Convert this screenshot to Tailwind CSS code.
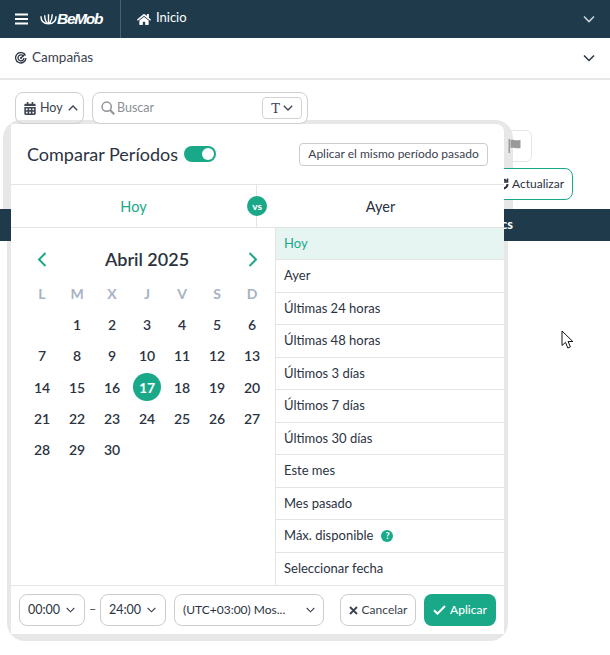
<!DOCTYPE html>
<html lang="es">
<head>
    <meta charset="UTF-8">
    <meta name="viewport" content="width=device-width, initial-scale=1.0">
    <title>BeMob - Campañas</title>
    <script src="https://cdn.jsdelivr.net/npm/@tailwindcss/browser@4"></script>
</head>
<body class="relative w-[610px] h-[655px] overflow-hidden bg-white font-['Lato',sans-serif] text-[#2b3342]">
    <!-- top nav -->
    <header class="flex items-center h-[38px] bg-[#1e3a4b] text-white">
        <div class="flex items-center w-[121px] h-full border-r border-[#4a6270] pl-[15px]">
            <svg class="w-[13px] h-[12px]" viewBox="0 0 13 12" fill="none" stroke="white" stroke-width="2"><path d="M0 1.5h13M0 6h13M0 10.5h13"/></svg>
            <svg class="ml-[12px] w-[17px] h-[14px]" viewBox="0 0 18 14" fill="none" stroke="white" stroke-width="1.5"><path d="M1 4c0 5 3 8 8 8s8-3 8-8M5 3c0 4 1 7 3 9M9 2v10M13 2c0 4-1 7-3 10"/></svg>
            <span class="font-['Liberation_Sans',sans-serif] font-bold italic text-[15.5px] tracking-[-1.3px]">BeMob</span>
        </div>
        <svg class="ml-[16px] w-[14px] h-[13px]" viewBox="0 0 576 512" fill="white"><path d="M280.37 148.26L96 300.11V464a16 16 0 0 0 16 16l112.06-.29a16 16 0 0 0 15.92-16V368a16 16 0 0 1 16-16h64a16 16 0 0 1 16 16v95.64a16 16 0 0 0 16 16.05L464 480a16 16 0 0 0 16-16V300L295.67 148.26a12.19 12.19 0 0 0-15.3 0zM571.6 251.47L488 182.56V44.05a12 12 0 0 0-12-12h-56a12 12 0 0 0-12 12v72.61L318.47 43a48 48 0 0 0-61 0L4.34 251.47a12 12 0 0 0-1.6 16.9l25.5 31A12 12 0 0 0 45.15 301l235.22-193.74a12.19 12.19 0 0 1 15.3 0L530.9 301a12 12 0 0 0 16.9-1.6l25.5-31a12 12 0 0 0-1.7-16.93z"/></svg>
        <span class="ml-[5px] text-[13px] -mt-[2px]">Inicio</span>
        <svg class="ml-auto mr-[15px] w-[12px] h-[8px]" viewBox="0 0 12 8" fill="none" stroke="#c9d2d8" stroke-width="1.6"><path d="M1 1.5l5 5 5-5"/></svg>
    </header>

    <!-- section row -->
    <div class="flex items-center h-[42px] border-b-2 border-[#e8e8e8] pl-[15px]">
        <svg class="w-[12px] h-[12px]" viewBox="0 0 12 12" fill="none" stroke="#2b3342" stroke-width="1.3"><path d="M10.5 3.5A5.2 5.2 0 1 0 11 6"/><path d="M8.6 4.4A3 3 0 1 0 9 6"/><circle cx="6" cy="6" r="1" fill="#2b3342" stroke="none"/><path d="M6 6l4-4"/></svg>
        <span class="ml-[5px] text-[13.5px] text-[#3a4250] -mt-[1px]">Campañas</span>
        <svg class="ml-auto mr-[15px] w-[12px] h-[8px]" viewBox="0 0 12 8" fill="none" stroke="#2b3342" stroke-width="1.5"><path d="M1 1.5l5 5 5-5"/></svg>
    </div>

    <!-- popup backdrop, sits behind the dark bar -->
    <div class="absolute left-[3px] top-[120px] w-[510px] h-[89px] bg-[#e7e7e7] rounded-t-[18px]"></div>
    <div class="absolute left-[7px] top-[241px] w-[501px] h-[400px] bg-[#e7e7e7] rounded-b-[18px]"></div>

    <!-- toolbar -->
    <div class="relative flex gap-2 items-start pt-3 pl-[15px]">
        <button class="flex items-center w-[69px] h-[32px] pl-2 border border-[#cfcfcf] rounded-lg text-[12.5px] text-[#3a4250]">
            <svg class="w-[12px] h-[13px] shrink-0" viewBox="0 0 448 512" fill="#3f4652"><path d="M0 464c0 26.5 21.5 48 48 48h352c26.5 0 48-21.5 48-48V192H0v272zm320-196c0-6.6 5.4-12 12-12h40c6.6 0 12 5.4 12 12v40c0 6.6-5.4 12-12 12h-40c-6.6 0-12-5.4-12-12v-40zm0 128c0-6.6 5.4-12 12-12h40c6.6 0 12 5.4 12 12v40c0 6.6-5.4 12-12 12h-40c-6.6 0-12-5.4-12-12v-40zM192 268c0-6.6 5.4-12 12-12h40c6.6 0 12 5.4 12 12v40c0 6.6-5.4 12-12 12h-40c-6.6 0-12-5.4-12-12v-40zm0 128c0-6.6 5.4-12 12-12h40c6.6 0 12 5.4 12 12v40c0 6.6-5.4 12-12 12h-40c-6.6 0-12-5.4-12-12v-40zM64 268c0-6.6 5.4-12 12-12h40c6.6 0 12 5.4 12 12v40c0 6.6-5.4 12-12 12H76c-6.6 0-12-5.4-12-12v-40zm0 128c0-6.6 5.4-12 12-12h40c6.6 0 12 5.4 12 12v40c0 6.6-5.4 12-12 12H76c-6.6 0-12-5.4-12-12v-40zM400 64h-48V16c0-8.8-7.2-16-16-16h-32c-8.8 0-16 7.2-16 16v48H160V16c0-8.8-7.2-16-16-16h-32c-8.8 0-16 7.2-16 16v48H48C21.5 64 0 85.5 0 112v48h448v-48c0-26.5-21.5-48-48-48z"/></svg>
            <span class="ml-[4px]">Hoy</span>
            <svg class="ml-[5px] w-[10px] h-[6px]" viewBox="0 0 10 6" fill="none" stroke="#3a4250" stroke-width="1.3"><path d="M.8 5.2L5 1l4.2 4.2"/></svg>
        </button>
        <div class="flex items-center w-[216px] h-[32px] pl-2 pr-[5px] bg-white border border-[#cfcfcf] rounded-lg">
            <svg class="w-[14px] h-[14px] shrink-0" viewBox="0 0 14 14" fill="none" stroke="#8f9296" stroke-width="1.5"><circle cx="5.7" cy="5.7" r="4.6"/><path d="M9 9l4.2 4.2" stroke-width="2"/></svg>
            <span class="ml-[2px] text-[12.5px] text-[#8d9196]">Buscar</span>
            <div class="ml-auto flex items-center justify-center gap-[3px] w-[40px] h-[22px] border border-[#d2d2d2] rounded">
                <span class="font-['DejaVu_Serif',serif] text-[13px] leading-none text-[#3a4250]">T</span>
                <svg class="w-[10px] h-[6px]" viewBox="0 0 10 6" fill="none" stroke="#3a4250" stroke-width="1.3"><path d="M.8.8L5 5l4.2-4.2"/></svg>
            </div>
        </div>
    </div>

    <!-- right side controls, mostly behind the popup -->
    <div class="flex justify-end pr-[78px] mt-[6px]">
        <div class="relative flex items-center justify-center w-[27px] h-[32px] border border-[#e6e6e6] rounded-md">
            <svg class="w-[13px] h-[14px] ml-[-9px] mt-[-1px]" viewBox="0 0 12 14" fill="#9a9a9a"><path d="M0 0h1.5v14H0zM2 1c3-1 4 1 10 0v8c-5 1-7-1-10 0z"/></svg>
        </div>
    </div>
    <div class="flex justify-end pr-[37px] mt-[6px]">
        <button class="relative flex items-center w-[80px] h-[32px] bg-white border border-[#19a888] rounded-lg text-[12px]">
            <svg class="ml-[3px] w-[12px] h-[12px] shrink-0" viewBox="0 0 12 12" fill="none" stroke="#2b3342" stroke-width="2"><path d="M1.5 6a4.5 4.5 0 0 1 8-2.8M10.5 6a4.5 4.5 0 0 1-8 2.8"/><path d="M10.5.5V4H7M1.5 11.5V8H5" stroke-width="1.6"/></svg>
            <span class="ml-[3px] whitespace-nowrap">Actualizar</span>
        </button>
    </div>
    <div class="relative z-10 flex items-center justify-end h-[32px] mt-[9px] pr-[97px] bg-[#1e3a4b] text-white text-[13px] font-bold">cs</div>

    <!-- date range popup -->
    <div class="absolute z-20 left-[11px] top-[124px] flex flex-col w-[493px] h-[510px] bg-white rounded-tr-lg">
        <div class="flex items-center h-[61px] border-b border-[#e4e4e4] pl-4 pr-4">
            <span class="text-[18px]">Comparar Períodos</span>
            <div class="ml-[6px] flex items-center justify-end w-[32px] h-[16px] pr-[2px] bg-[#19a888] rounded-full">
                <div class="w-[12px] h-[12px] bg-white rounded-full"></div>
            </div>
            <button class="ml-auto w-[189px] h-[23px] border border-[#cccccc] rounded text-[12px] whitespace-nowrap text-[#3a4250]">Aplicar el mismo período pasado</button>
        </div>
        <div class="relative grid grid-cols-[246px_1fr] h-[43px] border-b border-[#e4e4e4] text-[14.5px]">
            <div class="flex items-center justify-center border-r border-[#e4e4e4] text-[#19a888] pt-[2px]">Hoy</div>
            <div class="flex items-center justify-center pt-[2px]">Ayer</div>
            <div class="absolute left-[236px] top-[11px] flex items-center justify-center w-[20px] h-[20px] rounded-full bg-[#19a888] text-white text-[10px] font-black">vs</div>
        </div>
        <div class="flex flex-1 min-h-0">
            <!-- calendar -->
            <div class="w-[264px] pl-[13.5px] pt-[15px]">
                <div class="flex items-center justify-between w-[245px] h-[33px] px-[12px]">
                    <svg class="w-[10px] h-[15px]" viewBox="0 0 10 15" fill="none" stroke="#19a888" stroke-width="2"><path d="M8.5 1L2 7.5 8.5 14"/></svg>
                    <span class="text-[18px] font-semibold">Abril 2025</span>
                    <svg class="w-[10px] h-[15px]" viewBox="0 0 10 15" fill="none" stroke="#19a888" stroke-width="2"><path d="M1.5 1L8 7.5 1.5 14"/></svg>
                </div>
                <div class="grid grid-cols-7 w-[245px] h-[31px] mt-[2px] items-center text-center text-[14px] font-bold text-[#a7b2c4]">
                    <span>L</span><span>M</span><span>X</span><span>J</span><span>V</span><span>S</span><span>D</span>
                </div>
                <div class="grid grid-cols-7 auto-rows-[31.25px] w-[245px] items-center justify-items-center text-[14px] font-semibold">
                    <span></span><span>1</span><span>2</span><span>3</span><span>4</span><span>5</span><span>6</span>
                    <span>7</span><span>8</span><span>9</span><span>10</span><span>11</span><span>12</span><span>13</span>
                    <span>14</span><span>15</span><span>16</span><span class="flex items-center justify-center w-[28px] h-[28px] rounded-full bg-[#19a888] text-white font-bold">17</span><span>18</span><span>19</span><span>20</span>
                    <span>21</span><span>22</span><span>23</span><span>24</span><span>25</span><span>26</span><span>27</span>
                    <span>28</span><span>29</span><span>30</span>
                </div>
            </div>
            <!-- presets -->
            <ul class="flex-1 grid grid-rows-11 border-l border-[#e4e4e4] text-[13px] text-[#2b3342]">
                <li class="flex items-center pl-2 border-b border-[#e4e4e4] bg-[#e6f5f2] text-[#19a888]">Hoy</li>
                <li class="flex items-center pl-2 border-b border-[#e4e4e4]">Ayer</li>
                <li class="flex items-center pl-2 border-b border-[#e4e4e4]">Últimas 24 horas</li>
                <li class="flex items-center pl-2 border-b border-[#e4e4e4]">Últimas 48 horas</li>
                <li class="flex items-center pl-2 border-b border-[#e4e4e4]">Últimos 3 días</li>
                <li class="flex items-center pl-2 border-b border-[#e4e4e4]">Últimos 7 días</li>
                <li class="flex items-center pl-2 border-b border-[#e4e4e4]">Últimos 30 días</li>
                <li class="flex items-center pl-2 border-b border-[#e4e4e4]">Este mes</li>
                <li class="flex items-center pl-2 border-b border-[#e4e4e4]">Mes pasado</li>
                <li class="flex items-center pl-2 border-b border-[#e4e4e4]">Máx. disponible<span class="ml-2 flex items-center justify-center w-[12px] h-[12px] rounded-full bg-[#19a888] text-white text-[9px] font-black">?</span></li>
                <li class="flex items-center pl-2">Seleccionar fecha</li>
            </ul>
        </div>
        <!-- footer -->
        <div class="flex items-center h-[49px] border-t border-[#e4e4e4] pl-[8px] text-[12.5px]">
            <div class="flex items-center justify-between w-[66px] h-[32px] pl-[8px] pr-[9px] border border-[#cccccc] rounded-lg">
                <span>00:00</span>
                <svg class="w-[9px] h-[6px]" viewBox="0 0 9 6" fill="none" stroke="#3a4250" stroke-width="1.1"><path d="M.7 1l3.8 3.8L8.3 1"/></svg>
            </div>
            <span class="w-[15px] text-center text-[#555]">–</span>
            <div class="flex items-center justify-between w-[66px] h-[32px] pl-[8px] pr-[9px] border border-[#cccccc] rounded-lg">
                <span>24:00</span>
                <svg class="w-[9px] h-[6px]" viewBox="0 0 9 6" fill="none" stroke="#3a4250" stroke-width="1.1"><path d="M.7 1l3.8 3.8L8.3 1"/></svg>
            </div>
            <div class="ml-2 flex items-center justify-between w-[150px] h-[32px] pl-[8px] pr-[8px] border border-[#cccccc] rounded-lg text-[12px]">
                <span class="whitespace-nowrap">(UTC+03:00) Mos...</span>
                <svg class="w-[9px] h-[6px]" viewBox="0 0 9 6" fill="none" stroke="#3a4250" stroke-width="1.1"><path d="M.7 1l3.8 3.8L8.3 1"/></svg>
            </div>
            <button class="ml-4 flex items-center justify-center gap-[4px] w-[76px] h-[32px] border border-[#cccccc] rounded-lg text-[12px] text-[#3a4250]">
                <svg class="w-[9px] h-[9px]" viewBox="0 0 9 9" fill="none" stroke="#3a4250" stroke-width="1.8"><path d="M1 1l7 7M8 1L1 8"/></svg>
                Cancelar
            </button>
            <button class="ml-2 flex items-center justify-center gap-[4px] w-[72px] h-[32px] rounded-lg bg-[#19a888] text-white text-[12px] font-medium">
                <svg class="w-[13px] h-[10px]" viewBox="0 0 13 10" fill="none" stroke="white" stroke-width="2"><path d="M1 5.2l3.500 3.500L12 1"/></svg>
                Aplicar
            </button>
        </div>
    </div>

    <!-- mouse pointer -->
    <svg class="absolute z-30 left-[561px] top-[330px] w-[13px] h-[20px]" viewBox="0 0 13 20" fill="white" stroke="#111" stroke-width="1"><path d="M1 1v14.5l3.500-3.200 2.300 5.700 2.600-1.100-2.300-5.400h4.700z"/></svg>
</body>
</html>
